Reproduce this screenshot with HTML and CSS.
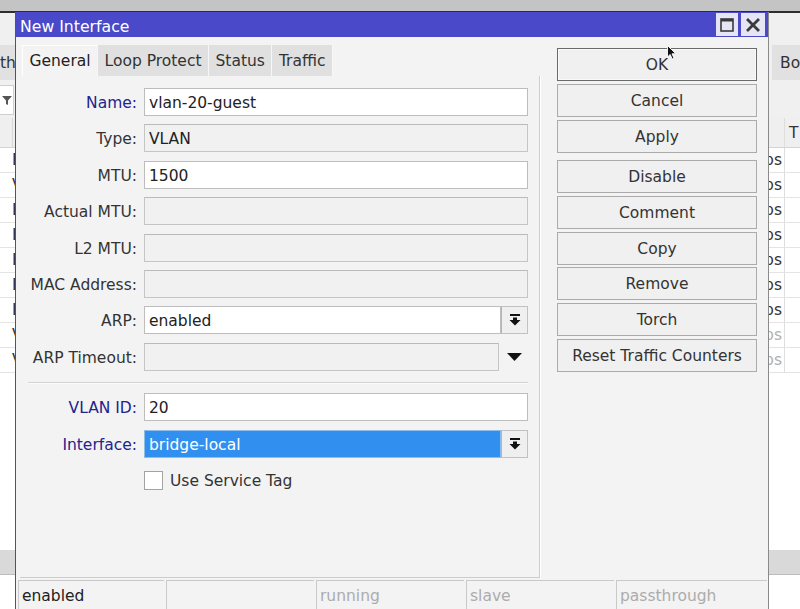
FILE: index.html
```html
<!DOCTYPE html>
<html>
<head>
<meta charset="utf-8">
<link rel="stylesheet" href="styles.css">
</head>
<body>
<div class="desk">
  <div class="bg-app">
    <div class="bg-top"></div>
    <div class="bg-rule"></div>
    <div class="bg-pad"></div>
    <div class="bg-tabs">
      <div class="bg-tab bg-tab-left">th</div>
      <div class="bg-tab bg-tab-right">Bo</div>
    </div>
    <div class="bg-filter">
      <div class="bg-filter-box">
        <svg width="10" height="9" viewBox="0 0 10 9"><path d="M0 0h10L6 4.5V9L4 8V4.5z" fill="#555"/></svg>
      </div>
    </div>
    <div class="bg-header">
      <div class="bg-lcell"></div>
      <div class="bg-rcell"></div>
      <div class="bg-tcell">T</div>
    </div>
    <div class="bg-row"><div class="bg-lcell">E</div><div class="bg-rcell">bps</div><div class="bg-tcell"></div></div>
    <div class="bg-row"><div class="bg-lcell dim">V</div><div class="bg-rcell">bps</div><div class="bg-tcell"></div></div>
    <div class="bg-row"><div class="bg-lcell">E</div><div class="bg-rcell">bps</div><div class="bg-tcell"></div></div>
    <div class="bg-row"><div class="bg-lcell">E</div><div class="bg-rcell">bps</div><div class="bg-tcell"></div></div>
    <div class="bg-row"><div class="bg-lcell">E</div><div class="bg-rcell">bps</div><div class="bg-tcell"></div></div>
    <div class="bg-row"><div class="bg-lcell">E</div><div class="bg-rcell">bps</div><div class="bg-tcell"></div></div>
    <div class="bg-row"><div class="bg-lcell">E</div><div class="bg-rcell">bps</div><div class="bg-tcell"></div></div>
    <div class="bg-row"><div class="bg-lcell dim">V</div><div class="bg-rcell dim">bps</div><div class="bg-tcell"></div></div>
    <div class="bg-row"><div class="bg-lcell dim">V</div><div class="bg-rcell dim">bps</div><div class="bg-tcell"></div></div>
    <div class="bg-fill"></div>
    <div class="bg-status"></div>
    <div class="bg-bottom"></div>
  </div>

  <div class="dialog">
    <div class="titlebar">
      <span class="title">New Interface</span>
      <div class="title-btns">
        <div class="tbtn tbtn-max">
          <svg width="14" height="14" viewBox="0 0 14 14"><rect x="1" y="1" width="12" height="12" fill="none" stroke="#3a3a3a" stroke-width="1.6"/><rect x="1" y="1" width="12" height="2.5" fill="#3a3a3a"/></svg>
        </div>
        <div class="tbtn tbtn-close">
          <svg width="14" height="14" viewBox="0 0 14 14"><path d="M2 2L12 12M12 2L2 12" stroke="#3a3a3a" stroke-width="2.8" stroke-linecap="square"/></svg>
        </div>
      </div>
    </div>

    <div class="main">
      <div class="leftcol">
        <div class="tabs">
          <div class="tab active">General</div>
          <div class="tab">Loop Protect</div>
          <div class="tab">Status</div>
          <div class="tab">Traffic</div>
        </div>
        <div class="panel">
          <div class="group">
            <div class="row"><label class="lbl blue">Name:</label><div class="field">vlan-20-guest</div></div>
            <div class="row"><label class="lbl">Type:</label><div class="field ro">VLAN</div></div>
            <div class="row"><label class="lbl">MTU:</label><div class="field">1500</div></div>
            <div class="row"><label class="lbl">Actual MTU:</label><div class="field ro"></div></div>
            <div class="row"><label class="lbl">L2 MTU:</label><div class="field ro"></div></div>
            <div class="row"><label class="lbl">MAC Address:</label><div class="field ro"></div></div>
            <div class="row"><label class="lbl">ARP:</label>
              <div class="combo">
                <div class="field combo-input">enabled</div>
                <div class="combo-btn"><svg width="12" height="12" viewBox="0 0 12 12"><rect x="1" y="0" width="10" height="2" fill="#111"/><path d="M4 3.5h4v2.5h3.5L6 11.5 0.5 6H4z" fill="#111"/></svg></div>
              </div>
            </div>
            <div class="row"><label class="lbl">ARP Timeout:</label>
              <div class="combo">
                <div class="field ro combo-input wide"></div>
                <div class="combo-arrow"><svg width="15" height="8" viewBox="0 0 15 8"><path d="M0 0h15L7.5 8z" fill="#111"/></svg></div>
              </div>
            </div>
          </div>
          <div class="sep"></div>
          <div class="group2">
            <div class="row"><label class="lbl blue">VLAN ID:</label><div class="field">20</div></div>
            <div class="row"><label class="lbl blue">Interface:</label>
              <div class="combo">
                <div class="field combo-input selected">bridge-local</div>
                <div class="combo-btn"><svg width="12" height="12" viewBox="0 0 12 12"><rect x="1" y="0" width="10" height="2" fill="#111"/><path d="M4 3.5h4v2.5h3.5L6 11.5 0.5 6H4z" fill="#111"/></svg></div>
              </div>
            </div>
            <div class="check-row"><span class="checkbox"></span><span class="check-label">Use Service Tag</span></div>
          </div>
        </div>
      </div>
      <div class="buttons">
        <div class="btn default">OK</div>
        <div class="btn">Cancel</div>
        <div class="btn">Apply</div>
        <div class="btn spaced">Disable</div>
        <div class="btn">Comment</div>
        <div class="btn">Copy</div>
        <div class="btn">Remove</div>
        <div class="btn">Torch</div>
        <div class="btn">Reset Traffic Counters</div>
      </div>
    </div>

    <div class="statusbar">
      <div class="scell c1">enabled</div>
      <div class="scell c2"></div>
      <div class="scell c3 dim">running</div>
      <div class="scell c4 dim">slave</div>
      <div class="scell c5 dim">passthrough</div>
    </div>
  </div>

  <svg class="cursor" width="10" height="15" viewBox="0 0 10 15"><path d="M0.5 0.5V12L3.2 9.5 5.2 14 7 13.2 5 8.8H8.8z" fill="#111" stroke="#fff" stroke-width="0.9"/></svg>
</div>
</body>
</html>
```

FILE: styles.css
```css
* { box-sizing: border-box; }
html, body { margin: 0; padding: 0; }
body {
  width: 800px;
  height: 609px;
  overflow: hidden;
  font-family: "DejaVu Sans", "Noto Sans", sans-serif;
  font-size: 15.5px;
  color: #333;
  background: #fff;
}
.desk { position: relative; width: 800px; height: 609px; overflow: hidden; }

/* background application */
.bg-app { display: flex; flex-direction: column; width: 800px; height: 609px; background: #f0f0f0; }
.bg-top { height: 11px; background: #c4c4c4; }
.bg-rule { height: 2px; background: #2e2e2e; }
.bg-pad { height: 32px; background: #f0f0f0; }
.bg-tabs { height: 35px; display: flex; justify-content: space-between; background: #f0f0f0; }
.bg-tab { background: #e1e1e1; line-height: 35px; padding-top: 1px; white-space: nowrap; overflow: hidden; }
.bg-tab-left { width: 30px; padding-left: 0; }
.bg-tab-right { width: 28px; padding-left: 8px; }
.bg-filter { height: 38px; padding-top: 5px; padding-bottom: 3px; }
.bg-filter-box { width: 14px; height: 30px; background: #fff; border: 1px solid #cfcfcf; border-left: none; display: flex; align-items: center; justify-content: center; }
.bg-header, .bg-row { display: flex; height: 25px; background: #fff; border-bottom: 1px solid #e4e4e4; }
.bg-header { height: 30px; background: #efefef; border-bottom: 1px solid #d4d4d4; }
.bg-lcell { width: 13px; border-right: 1px solid #dcdcdc; flex: none; }
.bg-row .bg-lcell { width: 30px; border-right: none; padding-left: 12px; line-height: 24px; color: #333; overflow: hidden; }
.bg-header .bg-lcell { width: 30px; border-right: none; background: linear-gradient(to right, #efefef 12px, #d8d8d8 12px, #d8d8d8 13px, #efefef 13px); }
.bg-rcell { margin-left: auto; width: 60px; text-align: right; padding-right: 2px; border-right: 1px solid #dedede; line-height: 24px; flex: none; }
.bg-tcell { width: 15px; flex: none; padding-left: 4px; line-height: 30px; overflow: hidden; white-space: nowrap; }
.dim { color: #b0b0b0; }
.bg-fill { flex: 1; background: #fff; }
.bg-status { height: 25px; background: #d9d9d9; border-bottom: 1px solid #bdbdbd; }
.bg-bottom { height: 34px; background: #fff; }

/* dialog */
.dialog {
  position: absolute;
  left: 15px;
  top: 12px;
  width: 754px;
  height: 597px;
  background: #f3f3f3;
  border-left: 1px solid #555;
  border-right: 1px solid #8a8a8a;
  display: flex;
  flex-direction: column;
}
.titlebar {
  height: 25px;
  flex: none;
  background: #4949c9;
  display: flex;
  align-items: flex-start;
  justify-content: space-between;
  padding: 0 3px 0 4px;
  color: #fff;
}
.title { font-size: 15.7px; line-height: 25px; padding-top: 2px; }
.title-btns { display: flex; gap: 3px; margin-top: 1px; }
.tbtn { height: 23px; background: #e5e5f5; display: flex; align-items: center; justify-content: center; }
.tbtn-max { width: 22px; }
.tbtn-close { width: 24px; }

.main { display: flex; height: 541px; flex: none; }
.leftcol { margin-left: 4px; width: 520px; display: flex; flex-direction: column; }
.tabs { margin-top: 8px; height: 31px; display: flex; padding-left: 2px; }
.tab {
  padding: 2px 6.5px 0;
  line-height: 29px;
  background: #e0e0e0;
  border-right: 1px solid #f7f7f7;
  color: #333;
  white-space: nowrap;
}
.tab.active { background: #f3f3f3; border-left: 1px solid #fff; border-top: 1px solid #fff; color: #222; padding-top: 1px; }
.panel {
  height: 502px;
  border-right: 1px solid #cdcdcd;
  border-bottom: 1px solid #cdcdcd;
  box-shadow: 1px 0 0 #fff;
  padding-top: 12px;
}
.group { display: flex; flex-direction: column; gap: 8.4px; }
.group2 { display: flex; flex-direction: column; gap: 9px; }
.row { display: flex; align-items: center; height: 28px; }
.lbl { width: 117px; text-align: right; margin-right: 7px; white-space: nowrap; color: #333; padding-top: 2px; }
.lbl.blue { color: #23238c; }
.field {
  width: 384px;
  height: 28px;
  background: #fff;
  border: 1px solid #bdbdbd;
  padding: 2px 4px 0 4px;
  line-height: 24px;
  color: #222;
  white-space: nowrap;
}
.field.ro { background: #f1f1f1; border-color: #c5c5c5; border-top-color: #bababa; }
.combo { display: flex; width: 384px; height: 28px; }
.combo-input { width: 357px; }
.combo-input.wide { width: 355px; }
.combo-btn {
  width: 27px;
  height: 28px;
  background: #efefef;
  border: 1px solid #c2c2c2;
  border-left: 1px solid #b5b5b5;
  display: flex;
  align-items: center;
  justify-content: center;
}
.combo-arrow { width: 29px; display: flex; align-items: center; justify-content: center; padding-left: 2px; padding-top: 1px; }
.field.selected { background: #3190ef; border-color: #8fbdea; color: #fff; }
.sep { margin: 11px 0 9px 8px; width: 500px; height: 2px; border-top: 1px solid #d3d3d3; border-bottom: 1px solid #fbfbfb; }
.check-row { display: flex; align-items: center; margin-top: 4px; padding-left: 124px; height: 19px; }
.checkbox { width: 19px; height: 19px; background: #fff; border: 1px solid #a3a3a3; }
.check-label { margin-left: 7px; color: #333; padding-top: 1px; }

.buttons { margin-left: 17px; width: 200px; padding-top: 11px; display: flex; flex-direction: column; gap: 2.8px; }
.btn {
  height: 33px;
  background: #f0f0f0;
  border: 1px solid #ababab;
  text-align: center;
  padding-top: 2px;
  line-height: 29px;
  color: #333;
  white-space: nowrap;
}
.btn.default { border-color: #6a6a6a; box-shadow: inset 0 0 0 1px #fafafa; }
.btn.spaced { margin-top: 4.6px; }

.statusbar { margin-top: 2px; display: flex; gap: 2px; padding-left: 2px; flex: 1; }
.scell {
  height: 100%;
  border-top: 1px solid #c9c9c9;
  border-left: 1px solid #c9c9c9;
  padding: 1px 0 0 3px;
  line-height: 29px;
  color: #222;
  white-space: nowrap;
}
.scell.dim { color: #acacac; }
.c1 { width: 146px; }
.c2 { width: 148px; }
.c3 { width: 148px; }
.c4 { width: 148px; }
.c5 { width: 151px; }

.cursor { position: absolute; left: 667px; top: 45px; }
```
